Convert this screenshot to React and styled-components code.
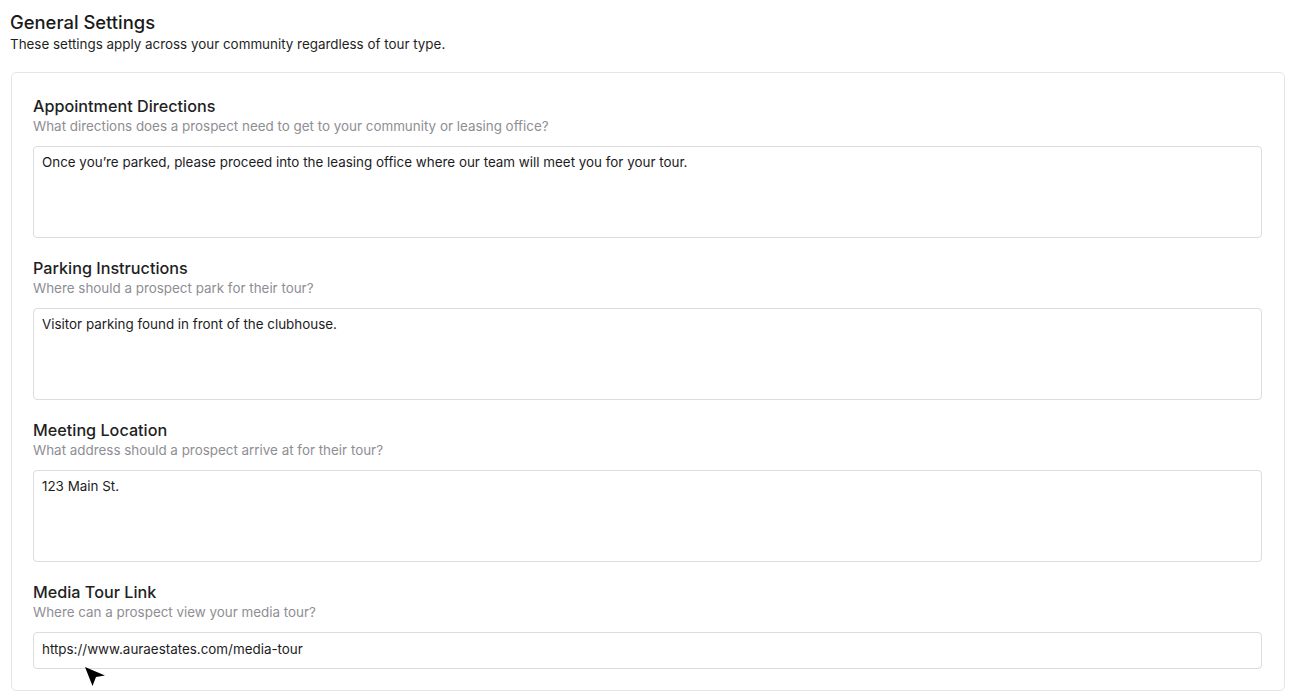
import React from "react";
import styled, { createGlobalStyle } from "styled-components";

const Global = createGlobalStyle`
  html, body { margin: 0; padding: 0; background: #fff; }
  body { font-family: Inter, "Liberation Sans", Arial, sans-serif; color: #1c1c1e; }
  * { box-sizing: border-box; }
`;

const Page = styled.div`
  padding: 11px 7px 0 10px;
  width: 1292px;
`;

const Title = styled.h1`
  margin: 0;
  font-size: 18.4px;
  font-weight: 500;
  line-height: 22px;
  color: #1a1a1a;
`;

const Subtitle = styled.p`
  margin: 2px 0 0;
  font-size: 13.4px;
  line-height: 18px;
  color: #1f1f1f;
`;

const Card = styled.section`
  margin: 19px 0 0 1px;
  border: 1px solid #e6e6e8;
  border-radius: 5px;
  padding: 23px 22px 21px 21px;
  display: flex;
  flex-direction: column;
  gap: 20px;
  position: relative;
`;

const Field = styled.div`
  display: flex;
  flex-direction: column;
`;

const Label = styled.label`
  font-size: 16.2px;
  font-weight: 500;
  line-height: 21px;
  color: #1f1f1f;
`;

const Help = styled.div`
  font-size: 13.4px;
  line-height: 18px;
  color: #8e8e93;
  margin-bottom: 11px;
`;

const Box = styled.div`
  border: 1px solid #dcdcde;
  border-radius: 4px;
  height: ${(p) => (p.$single ? 37 : 92)}px;
  padding: ${(p) => (p.$single ? "8px 8px" : "7px 8px")};
  font-size: 13.4px;
  line-height: 17px;
  color: #1c1c1e;
  position: relative;
`;

const Cursor = styled.svg`
  position: absolute;
  left: 50px;
  top: 33px;
  width: 22px;
  height: 22px;
`;

const fields = [
  {
    label: "Appointment Directions",
    help: "What directions does a prospect need to get to your community or leasing office?",
    value:
      "Once you\u2019re parked, please proceed into the leasing office where our team will meet you for your tour.",
  },
  {
    label: "Parking Instructions",
    help: "Where should a prospect park for their tour?",
    value: "Visitor parking found in front of the clubhouse.",
  },
  {
    label: "Meeting Location",
    help: "What address should a prospect arrive at for their tour?",
    value: "123 Main St.",
  },
  {
    label: "Media Tour Link",
    help: "Where can a prospect view your media tour?",
    value: "https://www.auraestates.com/media-tour",
    single: true,
  },
];

export default function App() {
  return (
    <>
      <Global />
      <Page>
        <Title>General Settings</Title>
        <Subtitle>These settings apply across your community regardless of tour type.</Subtitle>
        <Card>
          {fields.map((f) => (
            <Field key={f.label}>
              <Label>{f.label}</Label>
              <Help>{f.help}</Help>
              <Box $single={f.single}>
                {f.value}
                {f.single && (
                  <Cursor viewBox="0 0 22 22">
                    <polygon points="1,1 21,9.5 12,11 8.5,20" fill="#000" />
                  </Cursor>
                )}
              </Box>
            </Field>
          ))}
        </Card>
      </Page>
    </>
  );
}
